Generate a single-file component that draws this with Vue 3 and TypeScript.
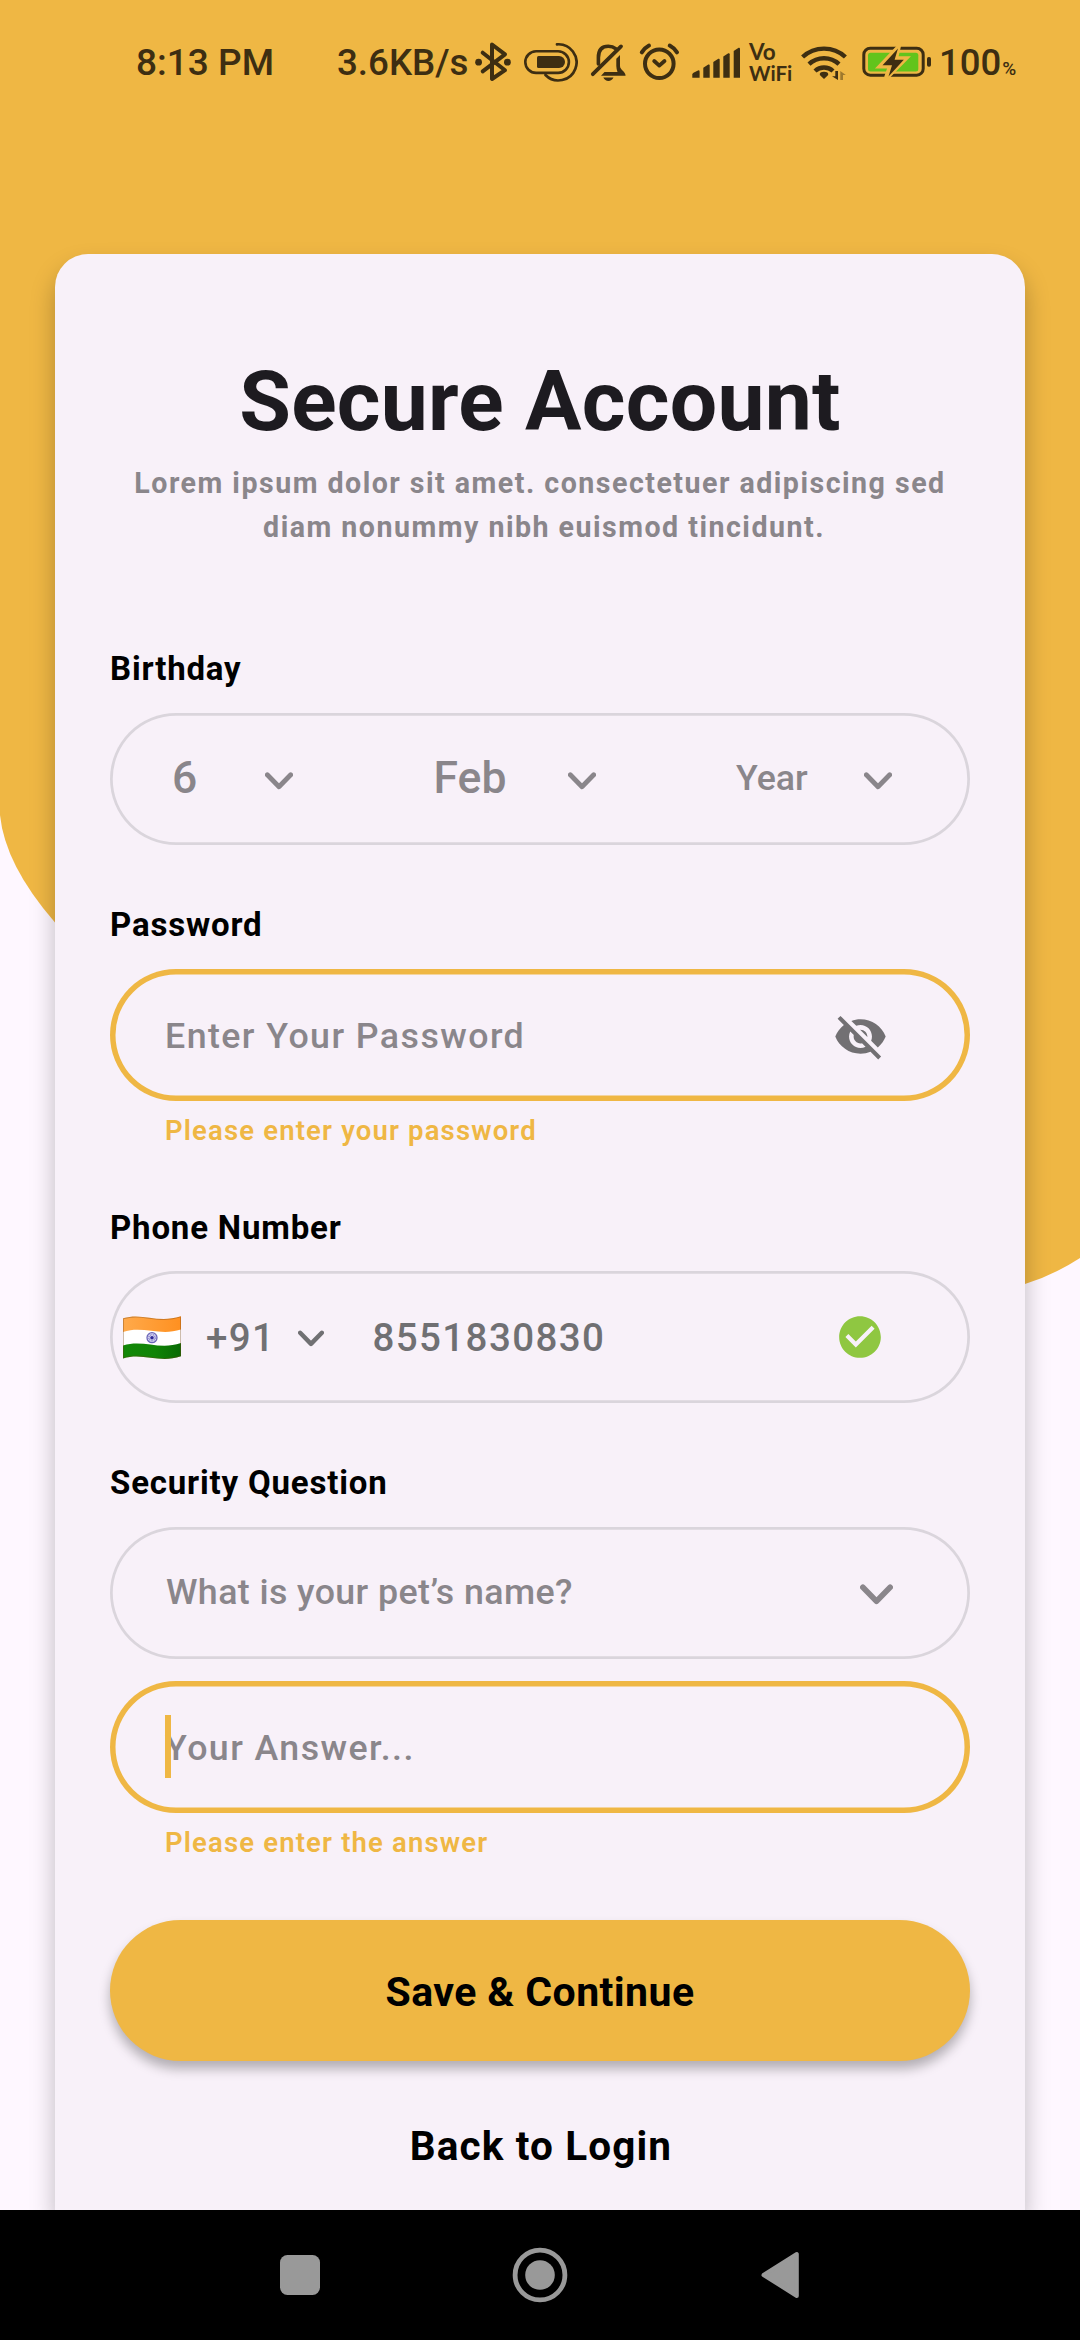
<script setup lang="ts">
import { ref } from 'vue'

interface DatePart {
  value: string
  size: 'large' | 'small'
}

const birthday = ref<DatePart[]>([
  { value: '6', size: 'large' },
  { value: 'Feb', size: 'large' },
  { value: 'Year', size: 'small' },
])
const dialCode = ref('+91')
const phone = ref('8551830830')
const question = ref('What is your pet’s name?')
</script>

<template>
  <div class="screen">
    <svg class="backdrop" viewBox="0 0 1080 2210" aria-hidden="true">
      <path d="M0 0H1080V1258Q1054 1275 1025 1284L55 922.5Q5 865 0 815Z" fill="#efb744" />
    </svg>

    <header class="status">
      <span class="time">8:13 PM</span>
      <span class="speed">3.6KB/s</span>
      <svg class="ic bt" viewBox="474 40 38 44">
        <path d="M482.7 52.7L505 70.2L492 79V44.5L505 54.3L482.7 71.3" class="ln" stroke-width="4" />
        <circle cx="478.6" cy="62.2" r="3.4" />
        <circle cx="507.4" cy="62.2" r="3.4" />
      </svg>
      <svg class="ic pill-ic" viewBox="523 40 55 44">
        <rect x="525.3" y="51.3" width="43.6" height="21.6" rx="10.8" class="ln" stroke-width="2.6" />
        <path d="M538.5 56H559a6 6 0 0 1 0 12H538.5a1.5 1.5 0 0 1-1.5-1.5V57.5A1.5 1.5 0 0 1 538.5 56Z" />
        <path d="M557 44.3A18.1 18.1 0 1 1 545.5 75" class="ln" stroke-width="2.7" />
      </svg>
      <svg class="ic bell" viewBox="590 40 37 44">
        <path d="M598.4 64V57.5C598.4 49.5 602.5 46.2 608.3 46.2C611.5 46.2 614 47.2 616 48.8" class="ln" stroke-width="3.6" />
        <path d="M592.8 74.2L621 46.4" class="ln" stroke-width="3.8" />
        <path d="M620 55V66C620 70 625.6 71.5 625.6 75.8H601L604.5 72H617.5C616.8 70 616.3 68 616.3 66V58.7Z" />
        <path d="M603.3 77.6H613.5C612.5 80 610.5 81 608.4 81S604.3 80 603.3 77.6Z" />
      </svg>
      <svg class="ic alarm" viewBox="639 40 41 44">
        <circle cx="659.3" cy="63.7" r="14.3" class="ln" stroke-width="4" />
        <path d="M654.2 61L659.3 65.6L664.5 61" class="ln" stroke-width="3.8" />
        <path d="M641.8 52.4Q644.5 48 649 45.6M677 52.4Q674.2 48 669.7 45.6" class="ln" stroke-width="4" />
      </svg>
      <svg class="ic signal" viewBox="691 40 50 44">
        <path d="M692.3 77.8V74.5Q692.5 73.5 693.5 72.8L698 70.4Q699.6 70 699.6 71.5V77.8Z" />
        <path d="M703.3 77.8V67.8L708.3 64.6Q709.7 64.3 709.7 65.5V77.8Z" />
        <path d="M713.3 77.8V62L718.3 58.8Q719.7 58.5 719.7 59.7V77.8Z" />
        <path d="M723.3 77.8V56.5L728.3 53.3Q729.7 53 729.7 54.2V77.8Z" />
        <path d="M733.7 77.8V51L738.6 47.8Q740 47.5 740 48.7V77.8Z" />
      </svg>
      <span class="vowifi"><span class="vo">Vo</span><span>WiFi</span></span>
      <svg class="ic wifi" viewBox="800 40 48 44">
        <path d="M802.6 57A31.5 31.5 0 0 1 845.4 57" class="ln flat" stroke-width="4.4" />
        <path d="M809 64.2A22 22 0 0 1 839 64.2" class="ln flat" stroke-width="4.4" />
        <path d="M815 71A13.2 13.2 0 0 1 833 71" class="ln flat" stroke-width="4.4" />
        <path d="M824 79L819.8 75Q819.3 71.8 824 71.8T828.2 75Z" />
        <path d="M838 71V80L832 76.3H835.3V71Z" />
        <path d="M840.3 80V71L845.8 75H843V80Z" opacity=".45" />
      </svg>
      <svg class="ic battery" viewBox="861 40 71 44">
        <rect x="863.8" y="48.2" width="59.4" height="27" rx="6.5" class="ln" stroke-width="3" />
        <rect x="927" y="57" width="4" height="9.8" rx="1.8" />
        <rect x="868" y="52.7" width="50.3" height="18.8" rx="2.5" fill="#62c41c" />
        <path d="M898 48L880.8 66H890.5L886.6 77.5L905 58.8H895.5Z" fill="#efb744" stroke="#efb744" stroke-width="5" />
        <path d="M898 48.5L882.5 65.2H892L888.5 76.5L903.8 59.8H894.6Z" />
      </svg>
      <span class="level">100</span><span class="percent">%</span>
    </header>

    <main class="card">
      <h1>Secure Account</h1>
      <p class="lead">
        <span>Lorem ipsum dolor sit amet. consectetuer adipiscing sed</span>
        <span class="second">diam nonummy nibh euismod tincidunt.</span>
      </p>

      <label class="label first">Birthday</label>
      <div class="field dates">
        <div v-for="part in birthday" :key="part.value" class="date">
          <span :class="part.size">{{ part.value }}</span>
          <svg class="chev" viewBox="0 0 28 18"><path d="M2.3 2.8L14 14.8L25.7 2.8" /></svg>
        </div>
      </div>

      <label class="label">Password</label>
      <div class="field error">
        <span class="hint">Enter Your Password</span>
        <svg class="eye" viewBox="0 0 24 24">
          <path d="M12 7c2.76 0 5 2.24 5 5 0 .65-.13 1.26-.36 1.83l2.92 2.92c1.51-1.26 2.7-2.89 3.43-4.75-1.73-4.39-6-7.5-11-7.5-1.4 0-2.74.25-3.98.7l2.16 2.16C10.74 7.13 11.35 7 12 7zM2 4.27l2.28 2.28.46.46C3.08 8.3 1.78 10.02 1 12c1.73 4.39 6 7.5 11 7.5 1.55 0 3.03-.3 4.38-.84l.42.42L19.73 22 21 20.73 3.27 3 2 4.27zM7.53 9.8l1.55 1.55c-.05.21-.08.43-.08.65 0 1.66 1.34 3 3 3 .22 0 .44-.03.65-.08l1.55 1.55c-.67.33-1.41.53-2.2.53-2.76 0-5-2.24-5-5 0-.79.2-1.53.53-2.2zm4.31-.78l3.15 3.15.02-.16c0-1.66-1.34-3-3-3l-.17.01z" />
        </svg>
      </div>
      <p class="message">Please enter your password</p>

      <label class="label after-message">Phone Number</label>
      <div class="field phone">
        <svg class="flag" viewBox="0 0 58 43">
          <defs>
            <linearGradient id="saffron" x1="0" x2="1"><stop offset="0" stop-color="#ffaa4b" /><stop offset="1" stop-color="#ff9020" /></linearGradient>
            <linearGradient id="green" x1="0" x2="1"><stop offset="0" stop-color="#128807" /><stop offset=".55" stop-color="#108406" /><stop offset="1" stop-color="#086a04" /></linearGradient>
            <clipPath id="wave"><path d="M0 2.3C20-4 34 8 58 .3V40.3C36 48 20 36 0 42.6Z" /></clipPath>
          </defs>
          <g clip-path="url(#wave)">
            <rect width="58" height="43" fill="#fff" />
            <path d="M0-4H58V13.6C36 20.5 20 9.2 0 16Z" fill="url(#saffron)" />
            <path d="M0 29.5C20 23 36 34.5 58 27V46H0Z" fill="url(#green)" />
            <path d="M0 2.3C20-4 34 8 58 .3V40.3C36 48 20 36 0 42.6Z" fill="none" stroke="#704010" stroke-opacity=".35" stroke-width="2" />
          </g>
          <circle cx="29" cy="21.7" r="5" fill="#e3e2f4" stroke="#6a64b8" stroke-width="1.3" />
          <circle cx="29" cy="21.7" r="3.1" fill="none" stroke="#8f8bd0" stroke-width="1.8" stroke-dasharray="1 .7" />
          <circle cx="29" cy="21.7" r="1.8" fill="#2d2796" />
        </svg>
        <span class="code">{{ dialCode }}</span>
        <svg class="chev small-chev" viewBox="0 0 28 18"><path d="M2.3 2.8L14 14.8L25.7 2.8" /></svg>
        <span class="number">{{ phone }}</span>
        <svg class="ok" viewBox="0 0 24 24"><path d="M12 2C6.48 2 2 6.48 2 12s4.48 10 10 10 10-4.48 10-10S17.52 2 12 2zm-2 15l-5-5 1.41-1.41L10 14.17l7.59-7.59L19 8l-9 9z" /></svg>
      </div>

      <label class="label">Security Question</label>
      <div class="field question">
        <span class="hint tight">{{ question }}</span>
        <svg class="chev big-chev" viewBox="0 0 28 18"><path d="M2.3 2.8L14 14.8L25.7 2.8" /></svg>
      </div>
      <div class="field error answer">
        <span class="hint">Your Answer...</span>
        <i class="caret"></i>
      </div>
      <p class="message">Please enter the answer</p>

      <button class="save" type="button">Save &amp; Continue</button>
      <a class="back">Back to Login</a>
    </main>

    <nav class="navbar">
      <svg viewBox="0 0 60 60"><rect x="10" y="10" width="40" height="40" rx="7.5" /></svg>
      <svg viewBox="0 0 60 60"><circle cx="30" cy="30" r="14.8" /><circle cx="30" cy="30" r="24.9" fill="none" stroke="#999" stroke-width="4.8" /></svg>
      <svg viewBox="0 0 60 60"><path d="M13.5 30L46.8 9V51Z" stroke="#999" stroke-width="4" stroke-linejoin="round" /></svg>
    </nav>
  </div>
</template>

<style>
body {
  margin: 0;
  background: #fef7ff;
}
</style>

<style scoped>
* {
  box-sizing: border-box;
}

.screen {
  position: relative;
  display: flex;
  flex-direction: column;
  width: 1080px;
  height: 2340px;
  overflow: hidden;
  background: #fef7ff;
  font-family: Roboto, sans-serif;
}

.backdrop {
  position: absolute;
  top: 0;
  left: 0;
  width: 1080px;
  height: 2210px;
}

.status {
  position: relative;
  display: flex;
  align-items: center;
  flex: none;
  height: 124px;
  padding-left: 136px;
  color: #3d2e12;
  font-size: 37px;
  font-weight: 500;
  line-height: 44px;
  white-space: nowrap;
}

.time {
  width: 201px;
  padding-top: 2px;
}

.speed {
  width: 137px;
  padding-top: 2px;
  font-size: 36.7px;
}

.ic {
  flex: none;
  height: 44px;
  fill: #3d2e12;
}

.ln {
  fill: none;
  stroke: #3d2e12;
  stroke-linecap: round;
  stroke-linejoin: round;
}

.flat {
  stroke-linecap: butt;
}

.bt { width: 38px; }
.pill-ic { width: 55px; margin-left: 11px; }
.bell { width: 37px; margin-left: 12px; }
.alarm { width: 41px; margin-left: 12px; }
.signal { width: 50px; margin-left: 11px; }
.wifi { width: 48px; }
.battery { width: 71px; margin-left: 13px; }

.vowifi {
  display: flex;
  flex-direction: column;
  gap: 1px;
  width: 51px;
  margin-left: 8px;
  font: 700 20.5px/20px Lato, sans-serif;
}

.vo {
  font-size: 22.5px;
}

.level {
  margin-left: 7px;
  padding-top: 2px;
  font-size: 36.5px;
}

.percent {
  margin-left: 1px;
  padding-top: 14px;
  font-size: 19px;
}

.card {
  position: relative;
  display: flex;
  flex-direction: column;
  flex: none;
  height: 1956px;
  margin: 130px 55px 0;
  padding: 99px 55px 0;
  border-radius: 33px 33px 0 0;
  background: #f8f1f9;
  box-shadow: 0 14px 24px rgba(0, 0, 0, 0.26);
}

h1 {
  margin: 0;
  color: #1d1b20;
  font-size: 84px;
  font-weight: 700;
  letter-spacing: 0.25px;
  line-height: 98px;
  text-align: center;
  white-space: nowrap;
}

.lead {
  display: flex;
  flex-direction: column;
  align-items: center;
  margin: 10px 0 0;
  color: #8a868b;
  font-size: 28.6px;
  font-weight: 680;
  letter-spacing: 1.48px;
  line-height: 44px;
  white-space: nowrap;
}

.second {
  padding-left: 8px;
}

.label {
  margin: 60px 0 24px;
  color: #000;
  font-size: 33px;
  font-weight: 700;
  letter-spacing: 0.82px;
  line-height: 40px;
}

.label.first { margin-top: 100px; }
.label.after-message { margin: 61px 0 23px; }

.field {
  position: relative;
  display: flex;
  align-items: center;
  flex: none;
  height: 132px;
  padding: 0 78px 0 55px;
  border-radius: 66px;
  box-shadow: inset 0 0 0 2.75px #dad5dc;
  color: #8a868b;
  font-size: 35.75px;
  font-weight: 460;
  white-space: nowrap;
}

.field.error {
  box-shadow: inset 0 0 0 5.5px #efb744;
}

.dates {
  justify-content: space-between;
  padding: 0 78px 3px 62px;
}

.date {
  display: flex;
  align-items: center;
  justify-content: space-between;
  width: 121px;
}

.date:nth-child(2) { width: 162px; }
.date:nth-child(3) { width: 156px; }

.large { font-size: 44.5px; }
.small { font-size: 35.75px; }

.chev {
  flex: none;
  width: 28px;
  height: 18px;
  margin-top: 6px;
  fill: none;
  stroke: #8a868b;
  stroke-width: 4.8;
  stroke-linecap: round;
  stroke-linejoin: round;
}

.hint {
  padding-top: 2px;
  letter-spacing: 1.43px;
}

.hint.tight {
  padding-top: 0;
  letter-spacing: 0.4px;
}

.eye {
  width: 55px;
  height: 55px;
  margin: 2px 4.5px 0 auto;
  fill: #727073;
}

.message {
  margin: 14px 0 0 55px;
  color: #efb744;
  font-size: 27.5px;
  font-weight: 600;
  letter-spacing: 1.16px;
  line-height: 32px;
  white-space: nowrap;
}

.phone {
  padding: 0 85px 0 13px;
  color: #707073;
  font-size: 38.5px;
  letter-spacing: 1.42px;
}

.flag {
  width: 58px;
  height: 43px;
}

.code {
  margin-left: 25px;
  padding-top: 1px;
}

.small-chev {
  width: 26px;
  height: 17px;
  margin: 2px 0 0 23px;
  stroke: #707073;
}

.number {
  margin-left: 48px;
}

.ok {
  width: 50px;
  height: 50px;
  margin-left: auto;
  fill: #8fc741;
}

.question {
  padding: 0 77px 3px 56px;
}

.big-chev {
  width: 33px;
  height: 21px;
  margin: 6px 0 0 auto;
}

.answer {
  margin-top: 22px;
}

.caret {
  position: absolute;
  top: 34px;
  left: 55px;
  width: 5.5px;
  height: 63px;
  background: #efb744;
}

.save {
  flex: none;
  height: 141px;
  margin: 61px 0 0;
  padding: 2px 0 0;
  border: 0;
  border-radius: 70.5px;
  background: #efb744;
  box-shadow: 0 8px 12px rgba(0, 0, 0, 0.28);
  color: #000;
  font: 660 41px Roboto, sans-serif;
  letter-spacing: 0.42px;
}

.back {
  margin-top: 61px;
  padding-left: 2px;
  color: #000;
  font-size: 40.5px;
  font-weight: 660;
  letter-spacing: 1.12px;
  line-height: 48px;
  text-align: center;
}

.navbar {
  position: relative;
  display: flex;
  align-items: center;
  justify-content: center;
  gap: 180px;
  flex: none;
  height: 130px;
  background: #000;
}

.navbar svg {
  width: 60px;
  height: 60px;
  fill: #999;
}
</style>
